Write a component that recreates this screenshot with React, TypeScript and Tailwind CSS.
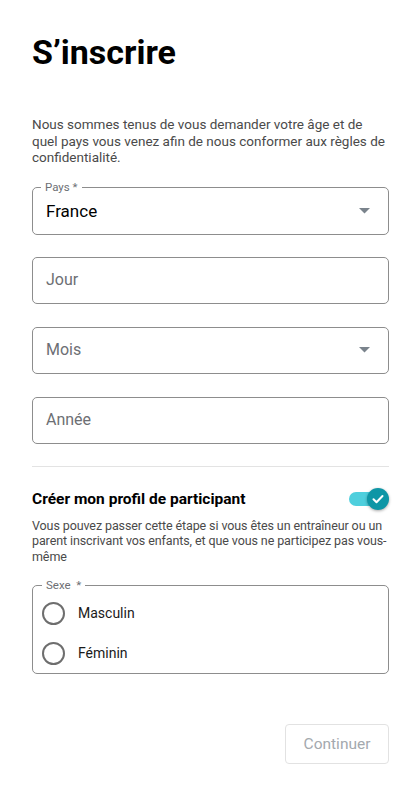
import React from 'react';

const Caret = () => (
  <svg width="11" height="6" viewBox="0 0 11 6" className="shrink-0">
    <path d="M0 0h11L5.5 5.5z" fill="#7a838c" />
  </svg>
);

const Field: React.FC<{ label: string; select?: boolean }> = ({ label, select }) => (
  <div className="h-[47px] rounded-[5px] border border-[#8d8d8d] flex items-center justify-between pl-[13px] pr-[18px]">
    <span className="text-[16px] text-[#6d6f74]">{label}</span>
    {select && <Caret />}
  </div>
);

const Radio: React.FC<{ label: string }> = ({ label }) => (
  <div className="flex items-center gap-[13px] h-[40px]">
    <span className="w-[23px] h-[23px] rounded-full border-2 border-[#6e6e6e]" />
    <span className="text-[14px] text-[#1a1a1a]">{label}</span>
  </div>
);

export default function App() {
  return (
    <div className="min-h-[793px] bg-white pl-[32px] pr-[28px] pt-[32px] font-['Roboto',sans-serif]">
      <h1 className="text-[34px] font-bold text-black leading-[40px]">S’inscrire</h1>

      <p className="mt-[44px] text-[13.5px] leading-[16.5px] text-[#4a4a4a]">
        Nous sommes tenus de vous demander votre âge et de quel pays vous venez afin de nous conformer aux règles de confidentialité.
      </p>

      {/* Pays */}
      <div className="relative mt-[21px] h-[48px] rounded-[5px] border border-[#8d8d8d] flex items-center justify-between pl-[13px] pr-[18px]">
        <span className="absolute -top-[8px] left-[8px] bg-white px-[4px] text-[11.5px] leading-[14px] text-[#6d6f74]">Pays *</span>
        <span className="text-[17px] text-black mt-[2px]">France</span>
        <Caret />
      </div>

      <div className="mt-[22px] flex flex-col gap-[23px]">
        <Field label="Jour" />
        <Field label="Mois" select />
        <Field label="Année" />
      </div>

      <div className="mt-[22px] border-t border-[#e3e3e3]" />

      <div className="mt-[21px] flex items-center justify-between">
        <span className="text-[15.5px] font-bold text-black">Créer mon profil de participant</span>
        <div className="relative w-[40px] h-[22px] flex items-center">
          <div className="w-[36px] h-[14px] rounded-full bg-[#4ecfdd]" />
          <div className="absolute right-0 top-0 w-[22px] h-[22px] rounded-full bg-[#0e96a6] shadow-[0_1px_3px_rgba(0,0,0,0.35)] flex items-center justify-center">
            <svg width="14" height="14" viewBox="0 0 14 14">
              <path d="M2.5 7.2l3 3L11.5 4" stroke="white" strokeWidth="2" fill="none" strokeLinecap="round" strokeLinejoin="round" />
            </svg>
          </div>
        </div>
      </div>

      <p className="mt-[7px] text-[12.5px] leading-[15.5px] tracking-[-0.1px] text-[#4a4a4a]">
        Vous pouvez passer cette étape si vous êtes un entraîneur ou un parent inscrivant vos enfants, et que vous ne participez pas vous-même
      </p>

      {/* Sexe */}
      <div className="relative mt-[21px] rounded-[5px] border border-[#8d8d8d] px-[9px] pt-[7px]">
        <span className="absolute -top-[8px] left-[9px] bg-white px-[4px] text-[11.5px] leading-[14px] text-[#6d6f74]">Sexe &nbsp;*</span>
        <Radio label="Masculin" />
        <Radio label="Féminin" />
      </div>

      <div className="mt-[50px] flex justify-end">
        <button className="h-[40px] w-[104px] rounded-[4px] border border-[#e2e2e2] text-[15.5px] text-[#a4a9ae] bg-white">
          Continuer
        </button>
      </div>
    </div>
  );
}
